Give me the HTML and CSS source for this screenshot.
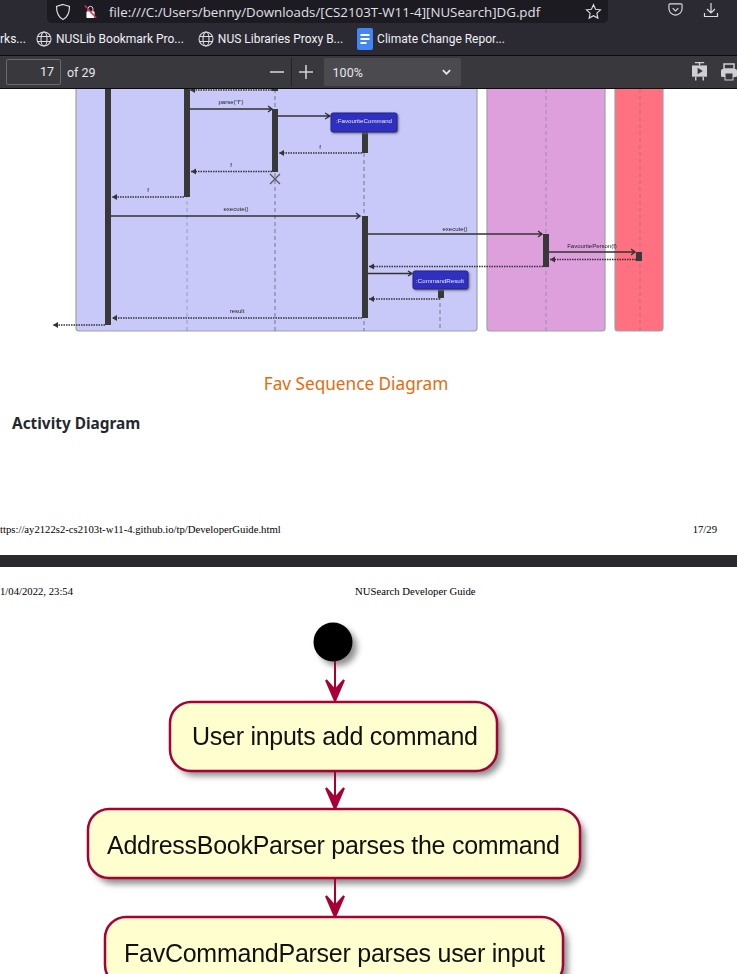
FILE: index.html
```html
<!DOCTYPE html>
<html lang="en">
<head>
    <meta charset="UTF-8">
    <title>[CS2103T-W11-4][NUSearch]DG.pdf</title>
    <link rel="stylesheet" href="styles.css">
</head>
<body>
    <div class="nav-bar">
        <div class="url-bar">
            <svg class="icon shield" viewBox="0 0 16 18"><path d="M8 1.5 L14.5 3.5 C14.5 10 13 14 8 16.5 C3 14 1.5 10 1.5 3.5 Z"/></svg>
            <svg class="icon lock" viewBox="0 0 16 18"><path d="M5 8 V5 a3 3 0 0 1 6 0 V8"/><rect x="3" y="8" width="10" height="8.5" rx="1.5" fill="#fbfbfe" stroke="none"/><path class="strike" d="M1 1 L15 16"/></svg>
            <span class="url-text">file:///C:/Users/benny/Downloads/[CS2103T-W11-4][NUSearch]DG.pdf</span>
            <svg class="icon star" viewBox="0 0 18 18"><path d="M9 1.8 L11.2 6.6 L16.4 7.2 L12.6 10.8 L13.6 16 L9 13.4 L4.4 16 L5.4 10.8 L1.6 7.2 L6.8 6.6 Z"/></svg>
        </div>
        <svg class="icon pocket" viewBox="0 0 16 16"><path d="M2 2 H14 a1 1 0 0 1 1 1 V7 a7 7 0 0 1 -14 0 V3 a1 1 0 0 1 1 -1 Z"/><path d="M5 6.5 L8 9.5 L11 6.5"/></svg>
        <svg class="icon download" viewBox="0 0 16 16"><path d="M8 1 V10.5 M4 7 L8 11 L12 7 M1.5 11 V14.5 H14.5 V11"/></svg>
    </div>

    <div class="bookmarks">
        <span class="bookmark first">rks...</span>
        <span class="bookmark">
            <svg class="icon globe" viewBox="0 0 16 16"><circle cx="8" cy="8" r="7"/><ellipse cx="8" cy="8" rx="3" ry="7"/><path d="M1 5.5 H15 M1 10.5 H15"/></svg>
            NUSLib Bookmark Pro...
        </span>
        <span class="bookmark">
            <svg class="icon globe" viewBox="0 0 16 16"><circle cx="8" cy="8" r="7"/><ellipse cx="8" cy="8" rx="3" ry="7"/><path d="M1 5.5 H15 M1 10.5 H15"/></svg>
            NUS Libraries Proxy B...
        </span>
        <span class="bookmark">
            <svg class="docs" viewBox="0 0 16 22"><rect width="16" height="22" rx="2" fill="#4285f4"/><path d="M3.5 7 H12.5 M3.5 11 H12.5 M3.5 15 H9.5" stroke="#fff" stroke-width="2"/></svg>
            Climate Change Repor...
        </span>
    </div>

    <div class="pdf-toolbar">
        <div class="page-input">17</div>
        <span class="page-count">of 29</span>
        <svg class="icon zoom-btn minus" viewBox="0 0 14 14"><path d="M0 7 H14"/></svg>
        <div class="zoom-divider"></div>
        <svg class="icon zoom-btn" viewBox="0 0 14 14"><path d="M0 7 H14 M7 0 V14"/></svg>
        <div class="zoom-select">
            <span>100%</span>
            <svg class="chevron" viewBox="0 0 10 6"><path d="M1 1 L5 5 L9 1"/></svg>
        </div>
        <svg class="present" viewBox="0 0 16 20"><rect x="0" y="3" width="16" height="12" fill="#d0d0d4"/><path d="M6 5.5 L11.5 9 L6 12.5 Z" fill="#38383d"/><path d="M3 0 H13 M8 0 V3 M4 15 V19 M12 15 V19" stroke="#d0d0d4" stroke-width="1.5"/></svg>
        <svg class="print" viewBox="0 0 16 18"><rect x="3" y="1" width="10" height="5" fill="none" stroke="#d0d0d4" stroke-width="1.5"/><rect x="0" y="6" width="16" height="8" rx="1.5" fill="#d0d0d4"/><rect x="4" y="10" width="8" height="7" fill="#38383d" stroke="#d0d0d4"/></svg>
    </div>

    <div class="viewer">
        <section class="page page-one">
            <svg class="sequence" viewBox="0 89 737 270" width="737" height="270">
                <g class="boxes">
                    <rect x="76" y="70" width="401" height="261" rx="3" fill="#c9c9f9"/>
                    <rect x="487" y="70" width="118" height="261" rx="3" fill="#dda0dd"/>
                    <rect x="615" y="70" width="48" height="261" rx="3" fill="#ff7080"/>
                </g>
                <g class="lifelines">
                    <path class="faint" d="M187 89 V331"/>
                    <path d="M275 89 V331 M364 132 V331 M440 289 V331"/>
                    <path class="faint" d="M546 89 V331 M640 89 V331"/>
                </g>
                <g class="bars">
                    <rect x="105" y="80" width="6" height="245"/>
                    <rect x="184" y="80" width="6" height="117"/>
                    <rect x="272" y="109" width="6" height="63"/>
                    <rect x="272" y="85" width="6" height="6"/>
                    <rect x="362" y="132" width="6" height="21"/>
                    <rect x="362" y="216" width="6" height="102"/>
                    <rect x="543" y="234" width="6" height="33"/>
                    <rect x="636" y="252" width="6" height="9"/>
                    <rect x="438" y="290" width="6" height="8"/>
                </g>
                <g class="calls">
                    <path d="M190 109 H272 M268 106 L272 109 L268 112"/>
                    <path d="M278 116 H330 M325 113 L330 116 L325 119"/>
                    <path d="M111 216 H360 M356 213 L360 216 L356 219"/>
                    <path d="M368 234 H542 M538 231 L542 234 L538 237"/>
                    <path d="M549 252 H635 M631 249 L635 252 L631 255"/>
                    <path d="M368 273.5 H412 M408 271 L412 273.5 L408 276"/>
                </g>
                <g class="returns">
                    <path d="M272 90 H190"/>
                    <path d="M362 153 H279"/>
                    <path d="M272 171.5 H191"/>
                    <path d="M184 197 H112"/>
                    <path d="M543 266.5 H369"/>
                    <path d="M636 259.5 H550"/>
                    <path d="M440 299 H369"/>
                    <path d="M362 318 H112"/>
                    <path d="M105 325 H53"/>
                </g>
                <g class="heads">
                    <path d="M195 87 L190 90 L195 93 Z"/>
                    <path d="M284 150 L279 153 L284 156 Z"/>
                    <path d="M196 168.5 L191 171.5 L196 174.5 Z"/>
                    <path d="M117 194 L112 197 L117 200 Z"/>
                    <path d="M374 263.5 L369 266.5 L374 269.5 Z"/>
                    <path d="M555 256.5 L550 259.5 L555 262.5 Z"/>
                    <path d="M374 296 L369 299 L374 302 Z"/>
                    <path d="M117 315 L112 318 L117 321 Z"/>
                    <path d="M58 322 L53 325 L58 328 Z"/>
                </g>
                <path class="destroy" d="M270 174 L280 184 M280 174 L270 184"/>
                <g class="objects">
                    <rect x="331" y="113" width="66" height="19" rx="2"/>
                    <rect x="413" y="271" width="55" height="18" rx="2"/>
                </g>
                <g class="object-labels">
                    <text x="364" y="123">:FavouriteCommand</text>
                    <text x="440" y="282.5">:CommandResult</text>
                </g>
                <g class="msg-labels">
                    <text x="231" y="104">parse("f")</text>
                    <text x="320" y="149">f</text>
                    <text x="231" y="167">f</text>
                    <text x="148" y="192">f</text>
                    <text x="236" y="211">execute()</text>
                    <text x="455" y="231">execute()</text>
                    <text x="592" y="248">FavouritePerson(f)</text>
                    <text x="237" y="313">result</text>
                </g>
            </svg>
            <p class="caption">Fav Sequence Diagram</p>
            <h3 class="section-title">Activity Diagram</h3>
            <div class="print-line footer-line">
                <span>ttps://ay2122s2-cs2103t-w11-4.github.io/tp/DeveloperGuide.html</span>
                <span>17/29</span>
            </div>
        </section>

        <div class="page-gap"></div>

        <section class="page page-two">
            <div class="print-line header-line">
                <span>1/04/2022, 23:54</span>
                <span class="doc-name">NUSearch Developer Guide</span>
            </div>
            <svg class="activity" viewBox="0 600 737 374" width="737" height="374">
                <g class="shadows">
                    <circle cx="338" cy="647" r="19"/>
                    <rect x="175" y="707" width="327" height="69" rx="21"/>
                    <rect x="93" y="815" width="492" height="69" rx="21"/>
                    <rect x="110" y="923" width="458" height="69" rx="21"/>
                </g>
                <circle cx="333" cy="642" r="19.5" fill="#000"/>
                <g class="flows">
                    <path d="M335 661 V701 M326 680 L335 701 L344 680 L335 690 Z"/>
                    <path d="M335 771 V809 M326 788 L335 809 L344 788 L335 798 Z"/>
                    <path d="M335 878 V917 M326 896 L335 917 L344 896 L335 906 Z"/>
                </g>
                <g class="steps">
                    <rect x="170" y="702" width="327" height="69" rx="21"/>
                    <rect x="88" y="809" width="492" height="69" rx="21"/>
                    <rect x="105" y="917" width="458" height="69" rx="21"/>
                </g>
                <g class="step-labels">
                    <text x="192" y="745" textLength="286">User inputs add command</text>
                    <text x="107" y="854" textLength="453">AddressBookParser parses the command</text>
                    <text x="124" y="962" textLength="421">FavCommandParser parses user input</text>
                </g>
            </svg>
        </section>
    </div>
</body>
</html>
```

FILE: styles.css
```css
html, body{
    margin: 0;
    height: 974px;
    overflow: hidden;
}
body{
    background: #fff;
    font-family: "Liberation Sans", Arial, sans-serif;
}
.icon{
    fill: none;
    stroke: #dcdce2;
    stroke-width: 1.2;
    flex-shrink: 0;
}

/* browser chrome */
.nav-bar{
    display: flex;
    align-items: flex-start;
    height: 23px;
    background: #2b2a33;
}
.url-bar{
    display: flex;
    align-items: center;
    width: 561px;
    height: 23px;
    margin-left: 47px;
    box-sizing: border-box;
    padding: 0 6px 0 8px;
    background: #1c1b22;
    border-radius: 0 0 5px 5px;
    color: #e0e0e6;
    font-family: "Open Sans", sans-serif;
    font-size: 13.3px;
}
.shield{
    width: 16px;
    height: 18px;
}
.lock{
    width: 13px;
    height: 16px;
    margin-left: 13px;
}
.strike{
    stroke: #e22850;
    stroke-width: 1.8;
}
.url-text{
    margin-left: 12px;
    flex: 1;
    white-space: nowrap;
}
.star{
    width: 17px;
    height: 17px;
}
.pocket{
    width: 15px;
    height: 15px;
    margin: 2px 0 0 60px;
}
.download{
    width: 16px;
    height: 16px;
    margin: 2px 0 0 20px;
}
.bookmarks{
    display: flex;
    align-items: center;
    height: 32px;
    background: #2b2a33;
    border-bottom: 1px solid #0c0c0d;
    color: #f0f0f4;
    font-family: Roboto, sans-serif;
    font-size: 12px;
    white-space: nowrap;
}
.bookmark{
    display: flex;
    align-items: center;
    gap: 4px;
    margin-right: 14px;
}
.bookmark.first{
    width: 22px;
}
.globe{
    width: 16px;
    height: 16px;
    stroke-width: 1.1;
}
.docs{
    width: 16px;
    height: 22px;
}
.pdf-toolbar{
    display: flex;
    align-items: center;
    height: 32px;
    background: #38383d;
    border-bottom: 1px solid #0c0c0d;
    color: #e8e8ea;
    font-family: Roboto, sans-serif;
    font-size: 12.5px;
}
.page-input{
    width: 48px;
    height: 24px;
    margin-left: 6px;
    padding-right: 6px;
    line-height: 24px;
    text-align: right;
    background: #38383d;
    border: 1px solid #6a6a6e;
    border-radius: 2px;
}
.page-count{
    margin-left: 6px;
    width: 207px;
}
.zoom-btn{
    width: 14px;
    height: 14px;
    stroke: #d0d0d4;
    stroke-width: 1.6;
}
.zoom-divider{
    width: 1px;
    height: 28px;
    margin: 0 7px;
    background: #242427;
}
.zoom-select{
    display: flex;
    align-items: center;
    justify-content: space-between;
    width: 140px;
    height: 28px;
    margin-left: 11px;
    box-sizing: border-box;
    padding: 0 10px 0 9px;
    background: #4a4a4f;
    border-radius: 2px;
}
.chevron{
    width: 9px;
    height: 6px;
    fill: none;
    stroke: #e8e8ea;
    stroke-width: 2;
}
.present{
    width: 15px;
    height: 20px;
    margin-left: 231px;
    flex-shrink: 0;
}
.print{
    width: 16px;
    height: 18px;
    margin-left: 14px;
    flex-shrink: 0;
}

/* pdf pages */
.page-one{
    display: flex;
    flex-direction: column;
    height: 466px;
}
.sequence{
    display: block;
    filter: blur(0.45px);
}
.boxes rect{
    stroke: #a0a0aa;
    stroke-width: 1.2;
}
.lifelines path{
    fill: none;
    stroke: #77778a;
    stroke-width: 1;
    stroke-dasharray: 4 3;
}
.lifelines .faint{
    opacity: 0.55;
}
.bars rect{
    fill: #383838;
}
.calls path{
    fill: none;
    stroke: #333;
    stroke-width: 1.4;
}
.returns path{
    fill: none;
    stroke: #333;
    stroke-width: 1.4;
    stroke-dasharray: 1.5 1;
}
.heads path{
    fill: #333;
}
.destroy{
    stroke: #555;
    stroke-width: 1.2;
}
.objects rect{
    fill: #3030c0;
    stroke: #25258c;
    stroke-width: 1;
    filter: drop-shadow(1px 1.5px 1px #666);
}
.object-labels text{
    fill: #e8e8ff;
    font-size: 6.2px;
    text-anchor: middle;
}
.msg-labels text{
    fill: #222;
    font-size: 6px;
    text-anchor: middle;
}
.caption{
    margin: 14px 0 0;
    width: 712px;
    text-align: center;
    color: #e8690b;
    font-family: "Noto Sans", sans-serif;
    font-size: 17.2px;
    line-height: 22px;
}
.section-title{
    margin: 19px 0 0 12px;
    color: #24292e;
    font-family: "Noto Sans", sans-serif;
    font-size: 15.4px;
    font-weight: bold;
    line-height: 20px;
}
.print-line{
    display: flex;
    color: #000;
    font-family: "Liberation Serif", serif;
    font-size: 10.7px;
    line-height: 12px;
    white-space: nowrap;
}
.footer-line{
    justify-content: space-between;
    margin-top: 89px;
    padding-right: 20px;
}
.page-gap{
    height: 12px;
    background: #2a2a2e;
}
.header-line{
    padding-top: 18px;
    height: 15px;
}
.doc-name{
    margin-left: 282px;
}
.activity{
    display: block;
    filter: blur(0.35px);
}
.shadows{
    fill: #8e8e8e;
    filter: blur(3px);
}
.flows path{
    fill: #a80036;
    stroke: #a80036;
    stroke-width: 2;
}
.steps rect{
    fill: #fefece;
    stroke: #a80036;
    stroke-width: 2.5;
}
.step-labels text{
    fill: #111;
    font-size: 25px;
}
```
